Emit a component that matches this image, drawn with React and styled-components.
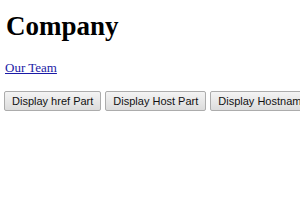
import React from 'react';
import styled, { createGlobalStyle } from 'styled-components';

const Global = createGlobalStyle`
  html, body { margin: 0; background: #fff; }
  body { padding: 5px; font-family: "Liberation Serif", "Times New Roman", serif; overflow: hidden; }
`;

const Title = styled.h1`
  font-size: 27px;
  font-weight: bold;
  margin: 6px 0 16px 1px;
  color: #000;
`;

const TeamLink = styled.a`
  font-size: 13px;
  color: #1a1aa6;
  text-decoration: underline;
  display: inline-block;
`;

const Para = styled.p`
  margin: 0 0 15px;
`;

const Toolbar = styled.div`
  display: flex;
  gap: 4px;
  margin-left: -1px;
  white-space: nowrap;
`;

const Button = styled.button`
  font-family: "Liberation Sans", Arial, sans-serif;
  font-size: 11px;
  color: #111;
  height: 20px;
  padding: 0 7px;
  border: 1px solid #acacac;
  border-radius: 2px;
  background: linear-gradient(#f4f4f4, #dcdcdc);
  flex-shrink: 0;
`;

export default function App() {
  return (
    <>
      <Global />
      <Title>Company</Title>
      <Para><TeamLink href="#">Our Team</TeamLink></Para>
      <Toolbar>
        <Button>Display href Part</Button>
        <Button>Display Host Part</Button>
        <Button>Display Hostname Part</Button>
      </Toolbar>
    </>
  );
}
